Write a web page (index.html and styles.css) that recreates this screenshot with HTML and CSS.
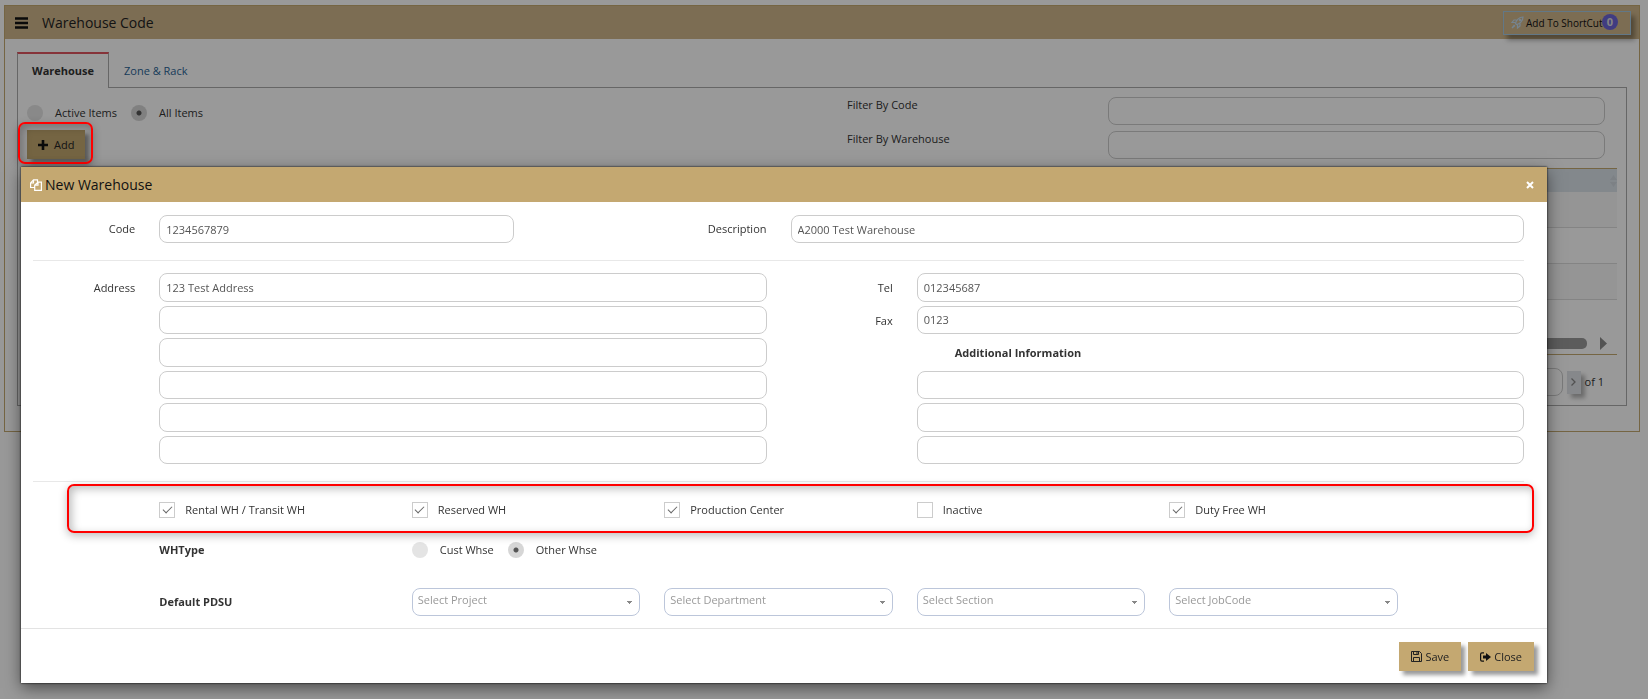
FILE: index.html
```html
<!DOCTYPE html>
<html lang="en">
<head>
    <meta charset="UTF-8">
    <meta name="viewport" content="width=device-width, initial-scale=1.0">
    <title>Warehouse Code</title>
    <link rel="stylesheet" href="styles.css">
</head>
<body>
    <div class="page">
        <header class="page-header">
            <button class="menu-btn" aria-label="Menu">
                <svg width="13" height="12" viewBox="0 0 13 12"><path d="M0 1.5h13M0 6h13M0 10.5h13" stroke="#111" stroke-width="2.4"/></svg>
            </button>
            <h1>Warehouse Code</h1>
            <button class="shortcut-btn">
                <svg width="13" height="13" viewBox="0 0 13 13" fill="none" stroke="#c3dcf0" stroke-width="1.2"><path d="M4.500 7.500C5 4.500 8 1 12 1c0 4-3.500 7-6.500 7.500zM5.500 4H3L1 6.500h3.200M9 7.500V10l-2.500 2V8.800M3.500 9L1 12l3-2.500"/><circle cx="9" cy="4" r=".6"/></svg>
                <span>Add To ShortCut</span>
                <span class="badge">0</span>
            </button>
        </header>

        <div class="page-body">
            <nav class="tabs">
                <a href="#warehouse" class="tab active">Warehouse</a>
                <a href="#zone" class="tab">Zone &amp; Rack</a>
            </nav>

            <div class="tab-content">
                <div class="toolbar">
                    <div class="toolbar-left">
                        <div class="radio-group">
                            <label><input type="radio" name="items">Active Items</label>
                            <label><input type="radio" name="items" checked>All Items</label>
                        </div>
                        <div class="add-wrap">
                            <button class="btn add-btn">
                                <svg width="10" height="10" viewBox="0 0 10 10"><path d="M5 0v10M0 5h10" stroke="#111" stroke-width="2.6"/></svg>
                                Add
                            </button>
                            <span class="callout"></span>
                        </div>
                    </div>
                    <div class="filters">
                        <label for="filterCode">Filter By Code</label>
                        <input type="text" id="filterCode">
                        <label for="filterWarehouse">Filter By Warehouse</label>
                        <input type="text" id="filterWarehouse">
                    </div>
                </div>

                <div class="list">
                    <div class="list-head">
                        <svg width="7" height="12" viewBox="0 0 7 12"><path d="M3.500 0L7 5H0zM0 7h7l-3.500 5z" fill="#d0d8de"/></svg>
                    </div>
                    <div class="list-row"></div>
                    <div class="list-row"></div>
                    <div class="list-row"></div>
                    <div class="list-scroll">
                        <span class="scroll-thumb"></span>
                        <svg width="7" height="13" viewBox="0 0 7 13"><path d="M0 0l7 6.500L0 13z" fill="#8a8a8a"/></svg>
                    </div>
                </div>

                <div class="pager">
                    <input type="text" value="1" aria-label="Page">
                    <button class="pager-next" aria-label="Next page">
                        <svg width="5" height="8" viewBox="0 0 5 8"><path d="M.5 .5L4 4 .5 7.500" fill="none" stroke="#888" stroke-width="1.300"/></svg>
                    </button>
                    <span>of 1</span>
                </div>
            </div>
        </div>
    </div>

    <div class="backdrop"></div>

    <form class="modal">
        <header class="modal-header">
            <svg width="12" height="12" viewBox="0 0 12 12" fill="none" stroke="#fff" stroke-width="1.200"><path d="M4.500 8.500H.6V4L3.500 .8h4V3M.6 4h2.900V.8M5 6l3-2.900h3.400v8.300H4.700V6.200H8V3.300"/></svg>
            <h2>New Warehouse</h2>
            <button type="button" class="modal-x" aria-label="Close dialog">
                <svg width="8" height="8" viewBox="0 0 8 8"><path d="M1 1l6 6M7 1L1 7" stroke="#fff" stroke-width="2"/></svg>
            </button>
        </header>

        <div class="modal-body">
            <div class="grid">
                <label for="code">Code</label>
                <input type="text" id="code" class="col-3" value="1234567879">
                <label for="description" class="col-2">Description</label>
                <input type="text" id="description" class="col-6" value="A2000 Test Warehouse">
            </div>

            <hr>

            <div class="grid address">
                <label for="address1">Address</label>
                <input type="text" id="address1" class="col-5" value="123 Test Address">
                <label for="tel">Tel</label>
                <input type="text" id="tel" class="col-5" value="012345687">

                <input type="text" class="col-5 line" aria-label="Address line 2">
                <label for="fax">Fax</label>
                <input type="text" id="fax" class="col-5" value="0123">

                <input type="text" class="col-5 line" aria-label="Address line 3">
                <strong class="info-title">Additional Information</strong>

                <input type="text" class="col-5 line" aria-label="Address line 4">
                <input type="text" class="col-5 info" aria-label="Additional information 1">
                <input type="text" class="col-5 line" aria-label="Address line 5">
                <input type="text" class="col-5 info" aria-label="Additional information 2">
                <input type="text" class="col-5 line" aria-label="Address line 6">
                <input type="text" class="col-5 info" aria-label="Additional information 3">
            </div>

            <hr>

            <div class="grid flags">
                <label class="check"><input type="checkbox" checked>Rental WH / Transit WH</label>
                <label class="check"><input type="checkbox" checked>Reserved WH</label>
                <label class="check"><input type="checkbox" checked>Production Center</label>
                <label class="check"><input type="checkbox">Inactive</label>
                <label class="check"><input type="checkbox" checked>Duty Free WH</label>
                <span class="callout"></span>
            </div>

            <div class="grid wh-type">
                <strong>WHType</strong>
                <div class="radio-group">
                    <label><input type="radio" name="whtype">Cust Whse</label>
                    <label><input type="radio" name="whtype" checked>Other Whse</label>
                </div>
            </div>

            <div class="grid pdsu">
                <strong>Default PDSU</strong>
                <select class="col-2" aria-label="Project"><option>Select Project</option></select>
                <select class="col-2" aria-label="Department"><option>Select Department</option></select>
                <select class="col-2" aria-label="Section"><option>Select Section</option></select>
                <select class="col-2" aria-label="Job code"><option>Select JobCode</option></select>
            </div>
        </div>

        <footer class="modal-footer">
            <button type="button" class="btn">
                <svg width="11" height="11" viewBox="0 0 11 11" fill="none" stroke="#222"><path d="M.5 .5h8l2 2v8H.5zM2.500 .5v3h5v-3M2.500 10.500v-4h6v4M6 1v2"/></svg>
                Save
            </button>
            <button type="button" class="btn">
                <svg width="11" height="10" viewBox="0 0 11 10"><path d="M4 .8H2Q.6 .8 .6 2.200v5.600Q.6 9.200 2 9.200h2" fill="none" stroke="#111" stroke-width="1.200"/><path d="M3 3.500h3V1l5 4-5 4V6.500H3z" fill="#111"/></svg>
                Close
            </button>
        </footer>
    </form>
</body>
</html>
```
FILE: styles.css
```css
* {
    box-sizing: border-box;
}

body {
    margin: 0;
    padding: 5px 8px 0 4px;
    min-height: 100vh;
    background-color: #fff;
    font-family: "Open Sans", "Noto Sans", sans-serif;
    font-size: 11px;
    line-height: 16px;
    color: #333;
}

h1, h2 {
    margin: 0;
    font-size: 14px;
    line-height: 20px;
    font-weight: normal;
    color: #222;
}

button, input, select {
    font-family: inherit;
    font-size: 11px;
    line-height: 16px;
}

button {
    padding: 0;
    border: none;
    background: none;
    color: #222;
    cursor: pointer;
}

svg {
    flex-shrink: 0;
}

input[type="text"], select {
    height: 28px;
    min-width: 0;
    padding: 0 6px;
    border: 1px solid #ccc;
    border-radius: 8px;
    background-color: transparent;
    color: #555;
}

input[type="radio"], input[type="checkbox"] {
    appearance: none;
    flex-shrink: 0;
    width: 16px;
    height: 16px;
    margin: 0;
}

input[type="radio"] {
    border-radius: 50%;
    background-color: #e4e4e4;
}

input[type="radio"]:checked {
    background: radial-gradient(circle, #555 2px, #d6d6d6 3px);
}

input[type="checkbox"] {
    display: grid;
    place-items: center;
    border: 1px solid #ccc;
}

input[type="checkbox"]:checked::before {
    content: "";
    width: 8px;
    height: 4px;
    margin-bottom: 3px;
    border: solid #666;
    border-width: 0 0 1px 1px;
    transform: rotate(-45deg);
}

.radio-group {
    display: flex;
    gap: 14px;
}

.radio-group label {
    display: flex;
    align-items: center;
    gap: 12px;
}

.btn {
    display: flex;
    align-items: center;
    gap: 3px;
    height: 29px;
    padding: 0 12px;
    background-color: #c4a871;
    box-shadow: 4px 4px 4px rgba(0, 0, 0, 0.4);
}

.callout {
    position: absolute;
    z-index: 3;
    border: 2px solid #f00;
    border-radius: 7px;
    box-shadow: 0 3px 8px rgba(0, 0, 0, 0.25), inset 3px 3px 8px rgba(0, 0, 0, 0.25);
    pointer-events: none;
}

/* page */

.page {
    border: 1px solid #c4a871;
}

.page-header {
    display: flex;
    align-items: center;
    height: 33px;
    padding: 0 8px 0 10px;
    background-color: #cfb68b;
}

.menu-btn {
    display: flex;
    margin-right: 14px;
}

.shortcut-btn {
    position: relative;
    display: flex;
    align-items: center;
    gap: 2px;
    width: 128px;
    height: 24px;
    margin-left: auto;
    padding: 0 7px;
    border: 1px solid #a3c8e2;
    box-shadow: 4px 5px 5px rgba(0, 0, 0, 0.35);
    font-size: 10px;
    color: #111;
    white-space: nowrap;
}

.badge {
    position: absolute;
    top: 2px;
    right: 12px;
    width: 16px;
    height: 16px;
    border-radius: 50%;
    background-color: #6c65d8;
    color: #ddd;
    font-size: 11px;
    font-weight: bold;
    text-align: center;
}

.page-body {
    padding: 13px 12px 25px;
}

.tabs {
    display: flex;
}

.tab {
    height: 35px;
    padding: 11px 15px;
    color: #2a6496;
    text-decoration: none;
}

.tab.active {
    position: relative;
    margin-bottom: -1px;
    height: 36px;
    padding: 9px 14px;
    border: 1px solid #aaa;
    border-top: 2px solid #e05560;
    border-bottom: none;
    background-color: #fff;
    color: #333;
    font-weight: bold;
}

.tab-content {
    padding: 9px;
    border: 1px solid #aaa;
}

.toolbar {
    display: grid;
    grid-template-columns: 820px 1fr;
}

.toolbar-left {
    padding-top: 8px;
}

.add-wrap {
    position: relative;
    width: max-content;
    margin-top: 9px;
}

.add-btn {
    gap: 6px;
    padding: 0 11px;
}

.add-wrap .callout {
    inset: -8px -8px -5px -9px;
}

.filters {
    display: grid;
    grid-template-columns: 1fr 497px;
    row-gap: 5px;
    margin-right: 12px;
}

.list {
    margin-top: 9px;
    border-top: 1px solid #c4a871;
    border-bottom: 1px solid #c4a871;
}

.list-head {
    display: flex;
    align-items: center;
    justify-content: flex-end;
    height: 23px;
    background-color: #dbe3ea;
}

.list-row {
    height: 36px;
    border-bottom: 1px solid #ddd;
}

.list-row:nth-child(even) {
    background-color: #f9f9f9;
}

.list-scroll {
    display: flex;
    align-items: center;
    gap: 13px;
    height: 54px;
    padding: 32px 10px 0 0;
}

.scroll-thumb {
    flex: 1;
    height: 11px;
    border-radius: 5px;
    background-color: #9a9a9a;
}

.pager {
    display: flex;
    align-items: center;
    justify-content: flex-end;
    gap: 4px;
    padding: 13px 13px 0 0;
}

.pager input {
    width: 60px;
    text-align: center;
    color: #337ab7;
}

.pager-next {
    width: 14px;
    height: 23px;
    background-color: #dfe3e8;
    box-shadow: 4px 4px 4px rgba(0, 0, 0, 0.3);
}

.backdrop {
    position: fixed;
    inset: 0;
    z-index: 2;
    background-color: rgba(0, 0, 0, 0.4);
}

/* new warehouse dialog */

.modal {
    position: absolute;
    top: 167px;
    left: 21px;
    right: 101px;
    z-index: 4;
    background-color: #fff;
    box-shadow: 0 5px 15px rgba(0, 0, 0, 0.5), 0 0 2px #000;
}

.modal-header {
    display: flex;
    align-items: center;
    gap: 3px;
    height: 35px;
    padding: 0 13px 0 9px;
    background-color: #c4a871;
}

.modal-header h2 {
    color: #111;
}

.modal-x {
    display: flex;
    margin-left: auto;
}

.modal-body {
    padding: 13px 11px 12px 0;
}

.modal-body hr {
    margin: 17px 12px 12px;
    border: none;
    border-top: 1px solid #e8e8e8;
}

.grid {
    display: grid;
    grid-template-columns: repeat(12, 1fr);
    align-items: center;
}

.grid > * {
    margin-left: 12px;
    margin-right: 12px;
}

.grid > label {
    text-align: right;
}

.col-2 {
    grid-column: span 2;
}

.col-3 {
    grid-column: span 3;
}

.col-5 {
    grid-column: span 5;
}

.col-6 {
    grid-column: span 6;
}

.address {
    grid-template-rows: repeat(6, 1fr);
    row-gap: 4px;
    height: 191px;
}

.address input {
    height: 100%;
}

.address .line {
    grid-column: 2 / span 5;
}

.address .info {
    grid-column: 8 / span 5;
}

.address label, .address .info-title {
    padding-top: 2px;
}

.address .info-title {
    grid-column: 8 / span 5;
    padding-left: 38px;
}

.grid.flags {
    position: relative;
}

.modal-body .address + hr {
    margin-bottom: 0;
}

.flags {
    padding: 20px 0 16px;
}

.grid .check {
    grid-column: span 2;
    display: flex;
    align-items: center;
    gap: 10px;
    white-space: nowrap;
}

.grid .check:first-child {
    grid-column: 2 / span 2;
}

.flags .callout {
    inset: 2px 2px 1px 46px;
    margin: 0;
}

.wh-type {
    padding: 8px 0 0;
}

.wh-type strong, .pdsu strong {
    grid-column: 2 / span 2;
}

.wh-type .radio-group {
    grid-column: span 6;
}

.pdsu {
    margin-top: 30px;
}

.pdsu select {
    appearance: none;
    padding: 0 5px 4px;
    border-color: #bcc6da;
    color: #999;
    background:
        linear-gradient(#888, #888) no-repeat right 7px top 12px / 5px 1px,
        linear-gradient(#888, #888) no-repeat right 8px top 13px / 3px 1px,
        linear-gradient(#888, #888) no-repeat right 9px top 14px / 1px 1px;
}

.modal-footer {
    display: flex;
    justify-content: flex-end;
    gap: 7px;
    padding: 13px 13px 12px;
    border-top: 1px solid #e3e3e3;
}
```
